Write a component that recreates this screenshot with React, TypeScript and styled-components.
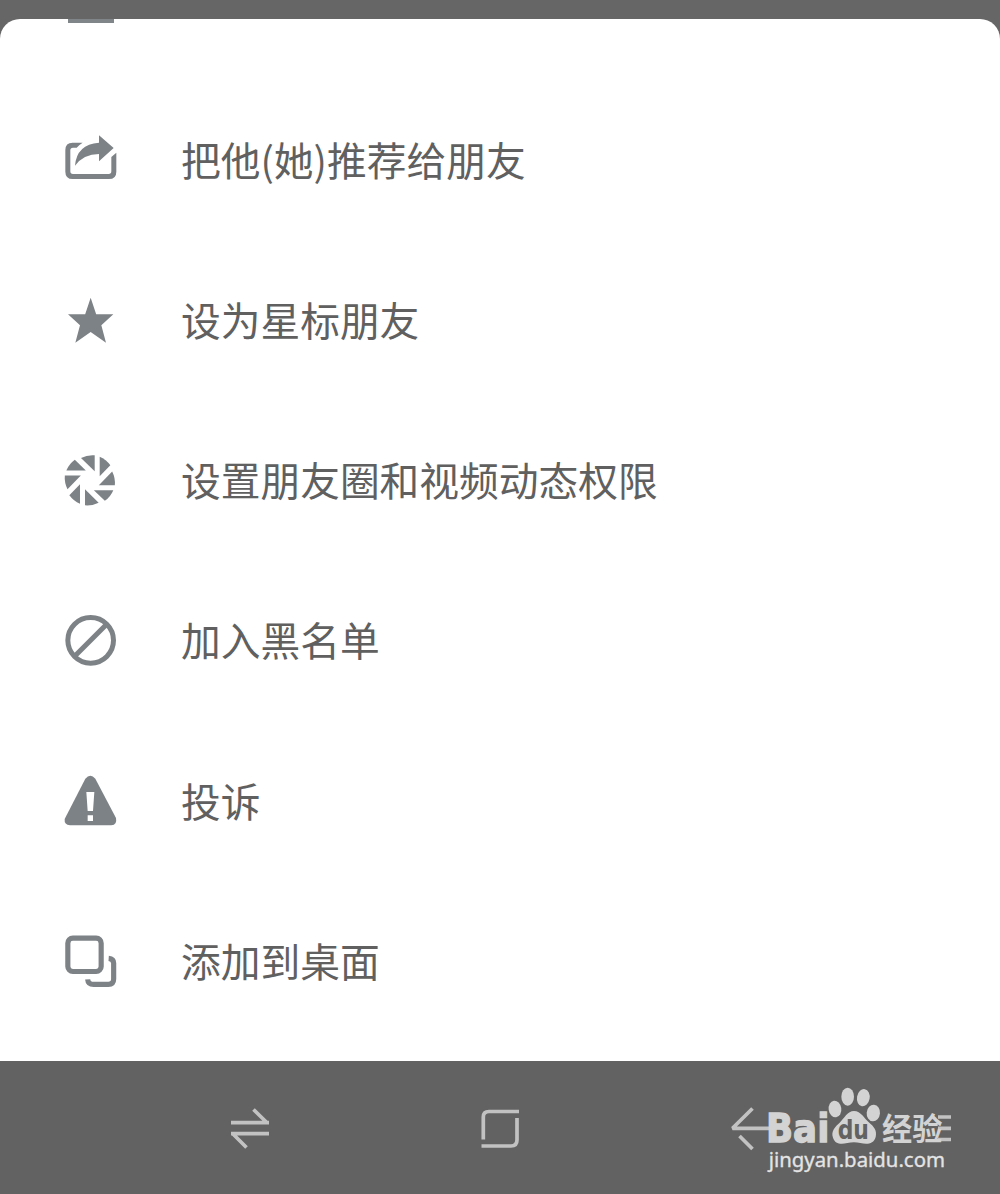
import React from 'react';
import styled, { createGlobalStyle } from 'styled-components';

const GlobalStyle = createGlobalStyle`
  body { margin: 0; background: #636363; }
  * { box-sizing: border-box; }
`;

const Screen = styled.main`
  display: flex;
  flex-direction: column;
  width: 1000px;
  height: 1194px;
  padding-top: 19px;
  background: #666666;
  overflow: hidden;
  font-family: 'Noto Sans CJK SC', 'Liberation Sans', sans-serif;
`;

const Sheet = styled.section`
  height: 1042px;
  background: #ffffff;
  border-radius: 20px 20px 0 0;
`;

const SheetTop = styled.div`
  height: 61px;
  padding-left: 68px;
`;

const ClippedIcon = styled.div`
  width: 46px;
  height: 4px;
  background: #7f8589;
`;

const List = styled.ul`
  margin: 0;
  padding: 0;
  list-style: none;
`;

const Row = styled.li`
  display: flex;
  align-items: center;
  gap: 41px;
  height: 160px;
  padding-left: 50px;
`;

const RowIcon = styled.svg`
  width: 90px;
  height: 80px;
  flex: none;
  color: #7d8286;
  fill: currentColor;
`;

const Label = styled.span<{ $lift: number }>`
  font-size: 39.72px;
  line-height: 58px;
  color: #606060;
  white-space: nowrap;
  padding-bottom: ${(p) => p.$lift}px;
`;

const NavBar = styled.nav`
  position: relative;
  flex: 1;
  display: flex;
  align-items: center;
  background: #626262;
`;

const NavDrawing = styled.svg`
  width: 1000px;
  height: 133px;
  flex: none;
`;

const Watermark = styled.svg`
  position: absolute;
  left: 720px;
  top: 19px;
  width: 280px;
  height: 114px;
`;

const icons: Record<string, React.ReactNode> = {
  share: (
    <>
      <path d="M98 68H68Q46 68 46 90V155Q46 177 68 177H177Q199 177 199 155V98L184 111V154Q184 162 176 162H69Q61 162 61 154V91Q61 83 69 83H80Q88 74 98 68Z" />
      <path d="M147 46L191 84L147 124V102Q101 102 75 137Q80 73 147 68Z" />
    </>
  ),
  star: <path d="M122 53L138.500 103H190L154 136L168 188L122 156L76 188L90 136L54 103H105.500Z" />,
  aperture: (
    <>
      {[0, 90, 180, 270].map((angle) => (
        <g key={angle} transform={`rotate(${angle} 119.500 121)`}>
          <path d="M93 54A76 76 0 0 1 134 46V94Z" />
          <path d="M149 50.500A76 76 0 0 1 181 76L149 109Z" />
        </g>
      ))}
    </>
  ),
  block: (
    <g fill="none" stroke="currentColor" strokeWidth="15">
      <circle cx="122" cy="121" r="68.500" />
      <path d="M170 73L74 169" />
    </g>
  ),
  warning: (
    <>
      <path d="M106 56Q121 38 136 56L198 174Q202 195 184 196H60Q42 195 44 177Z" />
      <path d="M109 96H133L129 153H113ZM113 166H129V183H113Z" fill="#fff" />
    </>
  ),
  desktop: (
    <g fill="none" stroke="currentColor" strokeWidth="15.500">
      <rect x="53.500" y="54.500" width="100" height="100" rx="15" />
      <path d="M176 115Q191 116 191 130V177Q191 193 175 193H131Q114 193 113 178" />
    </g>
  ),
};

const items = [
  { icon: 'share', label: '把他(她)推荐给朋友', lift: 3 },
  { icon: 'star', label: '设为星标朋友', lift: 3 },
  { icon: 'aperture', label: '设置朋友圈和视频动态权限', lift: 3 },
  { icon: 'block', label: '加入黑名单', lift: 2 },
  { icon: 'warning', label: '投诉', lift: 1 },
  { icon: 'desktop', label: '添加到桌面', lift: 1 },
];

export default function App() {
  return (
    <Screen>
      <GlobalStyle />
      <Sheet>
        <SheetTop>
          <ClippedIcon />
        </SheetTop>
        <List>
          {items.map((item) => (
            <Row key={item.icon}>
              <RowIcon viewBox="0 0 270 240">{icons[item.icon]}</RowIcon>
              <Label $lift={item.lift}>{item.label}</Label>
            </Row>
          ))}
        </List>
      </Sheet>
      <NavBar>
        <NavDrawing viewBox="0 1061 1000 133" fill="none" stroke="#c2c2c2" strokeWidth="3.700">
          <path d="M253.500 1109.500L267 1122.700M231 1122.700H269M269 1133.700H231M233 1134L246.500 1147.500" />
          <path d="M519 1111.500H489Q483.300 1111.500 483.300 1117V1139.500M481.500 1146H511Q517 1146 517 1140V1118" />
          <path strokeLinejoin="bevel" d="M752.500 1108.500L732.500 1128.300H770M739.500 1136L752.500 1149M938 1117H951M938 1128.300H951M938 1139.500H951" />
        </NavDrawing>
        <Watermark viewBox="0 0 840 342" fill="#d3d3d3">
          <text x="138" y="187" stroke="#d3d3d3" strokeWidth="4" fontFamily="DejaVu Sans, sans-serif" fontWeight="700" fontSize="116" textLength="190" lengthAdjust="spacingAndGlyphs">Bai</text>
          <ellipse cx="345" cy="87" rx="19" ry="25" transform="rotate(-8 345 87)" />
          <ellipse cx="383" cy="50" rx="19" ry="27" />
          <ellipse cx="430" cy="53" rx="19" ry="26" transform="rotate(10 430 53)" />
          <ellipse cx="460" cy="99" rx="20" ry="25" transform="rotate(5 460 99)" />
          <path d="M402 93C423 93 433 116 448 128C461 139 472 151 467 171C461 193 440 194 421 189Q402 184 382 189C362 194 345 192 339 173C332 153 346 140 359 128C374 114 382 93 402 93Z" />
          <text x="353" y="176" fill="#626262" fontFamily="DejaVu Sans, sans-serif" fontWeight="700" fontSize="79" textLength="94" lengthAdjust="spacingAndGlyphs">du</text>
          <text x="486" y="180" fontFamily="Noto Sans CJK SC, sans-serif" fontWeight="700" fontSize="92" textLength="181" lengthAdjust="spacingAndGlyphs">经验</text>
          <text x="146" y="260" fill="#e4e4e4" stroke="#e4e4e4" strokeWidth="1" fontFamily="Noto Sans, sans-serif" fontSize="62" textLength="529" lengthAdjust="spacingAndGlyphs">jingyan.baidu.com</text>
        </Watermark>
      </NavBar>
    </Screen>
  );
}
